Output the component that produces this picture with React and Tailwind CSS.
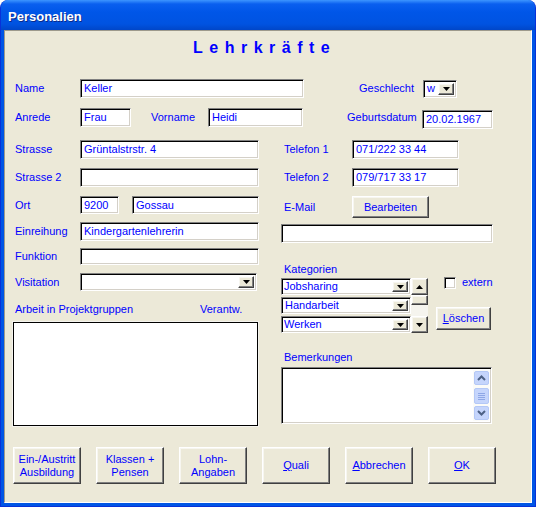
import React from "react";

const sunken =
  "bg-white border border-t-[#808080] border-l-[#808080] border-b-white border-r-white shadow-[inset_1px_1px_0_#000,inset_-1px_-1px_0_#d4d0c8]";
const raised =
  "bg-[#ECE9D8] border border-t-white border-l-white border-b-[#404040] border-r-[#404040] shadow-[inset_-1px_-1px_0_#808080,inset_1px_1px_0_#f7f6f0]";

function Label({ className = "", children }) {
  return <div className={`flex items-center shrink-0 whitespace-nowrap ${className}`}>{children}</div>;
}

function Field({ className = "", children }) {
  return (
    <div className={`${sunken} flex items-center shrink-0 pl-[3px] whitespace-nowrap overflow-hidden ${className}`}>
      {children}
    </div>
  );
}

function Arrow({ up }) {
  return (
    <svg width="7" height="4" viewBox="0 0 7 4">
      <path d={up ? "M3.5 0L7 4H0z" : "M0 0h7L3.5 4z"} fill="#000" />
    </svg>
  );
}

function DropBtn({ className = "" }) {
  return (
    <div className={`${raised} ml-auto h-full w-[16px] shrink-0 flex items-center justify-center ${className}`}>
      <Arrow />
    </div>
  );
}

function Combo({ className = "", children, pad = "pl-[3px]" }) {
  return (
    <div className={`${sunken} flex items-center shrink-0 p-[2px] ${className}`}>
      <span className={`${pad} whitespace-nowrap`}>{children}</span>
      <DropBtn />
    </div>
  );
}

function Button({ className = "", children }) {
  return (
    <div className={`${raised} flex flex-col items-center justify-center shrink-0 leading-[13px] text-center ${className}`}>
      {children}
    </div>
  );
}

function Chevron({ up }) {
  return (
    <svg width="9" height="6" viewBox="0 0 9 6">
      <path d={up ? "M1 5L4.5 1.5L8 5" : "M1 1L4.5 4.5L8 1"} fill="none" stroke="#4d6185" strokeWidth="2" />
    </svg>
  );
}

export default function App() {
  return (
    <div className="w-[536px] h-[507px] bg-white font-['Liberation_Sans',Arial,sans-serif] text-[11px] text-[#0000FF]">
      <div className="w-full h-full flex flex-col rounded-t-[8px] overflow-hidden bg-[#0055E5] border-l border-r border-b border-[#0831D9]">
        {/* title bar */}
        <div className="h-[30px] shrink-0 flex items-center pl-[7px] pt-[3px] bg-[linear-gradient(to_bottom,#3d95ff_0px,#0a5fef_4px,#0056e8_12px,#0053e1_24px,#0046c8_30px)]">
          <span className="text-white font-bold text-[13px] [text-shadow:1px_1px_0_#0a2a8a]">Personalien</span>
        </div>

        {/* client area */}
        <div className="flex-1 mx-[3px] mb-[3px] bg-[#ECE9D8] border border-t-[#9d9a8c] border-l-[#9d9a8c] border-b-white border-r-white flex flex-col">
          <div className="mt-[7px] pl-[188px] h-[20px] flex items-center text-[16px] font-bold tracking-[6.5px]">
            Lehrkräfte
          </div>

          {/* Name row */}
          <div className="mt-[21px] pl-[10px] h-[19px] flex items-center">
            <Label className="w-[65px]">Name</Label>
            <Field className="w-[224px] h-[19px]">Keller</Field>
            <Label className="ml-[55px] w-[64px]">Geschlecht</Label>
            <Combo className="w-[34px] h-[18px]" pad="pl-[1px]">w</Combo>
          </div>

          {/* Anrede row */}
          <div className="mt-[10px] pl-[10px] flex items-start">
            <Label className="w-[65px] h-[19px]">Anrede</Label>
            <Field className="w-[51px] h-[19px]">Frau</Field>
            <Label className="ml-[20px] w-[57px] h-[19px]">Vorname</Label>
            <Field className="w-[95px] h-[19px]">Heidi</Field>
            <Label className="ml-[44px] w-[75px] h-[19px]">Geburtsdatum</Label>
            <Field className="mt-[2px] w-[71px] h-[19px]">20.02.1967</Field>
          </div>

          {/* two columns */}
          <div className="mt-[11px] flex items-start">
            {/* left column */}
            <div className="ml-[8px] w-[246px] flex flex-col">
              <div className="flex items-center h-[19px]">
                <Label className="ml-[2px] w-[65px]">Strasse</Label>
                <Field className="w-[179px] h-[19px]">Grüntalstrstr. 4</Field>
              </div>
              <div className="mt-[9px] flex items-center h-[19px]">
                <Label className="ml-[2px] w-[65px]">Strasse 2</Label>
                <Field className="w-[179px] h-[19px]" />
              </div>
              <div className="mt-[9px] flex items-center h-[18px]">
                <Label className="ml-[2px] w-[65px]">Ort</Label>
                <Field className="w-[39px] h-[18px]">9200</Field>
                <Field className="ml-[13px] w-[127px] h-[18px]">Gossau</Field>
              </div>
              <div className="mt-[8px] flex items-center h-[19px]">
                <Label className="ml-[2px] w-[65px]">Einreihung</Label>
                <Field className="w-[179px] h-[19px]">Kindergartenlehrerin</Field>
              </div>
              <div className="mt-[7px] flex items-center h-[17px]">
                <Label className="ml-[2px] w-[65px]">Funktion</Label>
                <Field className="w-[179px] h-[17px]" />
              </div>
              <div className="mt-[8px] flex items-center h-[18px]">
                <Label className="ml-[2px] w-[65px]">Visitation</Label>
                <Combo className="w-[177px] h-[18px]" />
              </div>
              <div className="mt-[12px] flex items-center h-[13px]">
                <Label className="ml-[2px] w-[185px]">Arbeit in Projektgruppen</Label>
                <Label>Verantw.</Label>
              </div>
              <div className="mt-[6px] w-[245px] h-[104px] bg-white border border-black shadow-[0_0_0_1px_#f4f3ee]" />
            </div>

            {/* right column */}
            <div className="ml-[22px] flex flex-col">
              <div className="flex items-center h-[19px]">
                <Label className="ml-[3px] w-[68px]">Telefon 1</Label>
                <Field className="w-[107px] h-[19px]">071/222 33 44</Field>
              </div>
              <div className="mt-[9px] flex items-center h-[19px]">
                <Label className="ml-[3px] w-[68px]">Telefon 2</Label>
                <Field className="w-[107px] h-[19px]">079/717 33 17</Field>
              </div>
              <div className="mt-[9px] flex items-center h-[22px]">
                <Label className="ml-[3px] w-[68px]">E-Mail</Label>
                <Button className="w-[77px] h-[22px]">Bearbeiten</Button>
              </div>
              <Field className="mt-[6px] w-[212px] h-[19px]" />
              <Label className="mt-[20px] ml-[3px] h-[13px]">Kategorien</Label>

              <div className="flex items-start">
                <div className="mt-[2px] flex w-[147px] h-[55px]">
                  <div className="w-[130px] flex flex-col gap-[2px]">
                    <Combo className="w-[130px] h-[17px]" pad="pl-0">Jobsharing</Combo>
                    <Combo className="w-[130px] h-[17px]" pad="pl-[1px]">Handarbeit</Combo>
                    <Combo className="w-[130px] h-[17px]" pad="pl-0">Werken</Combo>
                  </div>
                  <div className="w-[17px] h-[55px] flex flex-col bg-[#f5f4ee]">
                    <div className={`${raised} h-[17px] flex items-center justify-center`}>
                      <Arrow up />
                    </div>
                    <div className={`${raised} h-[10px]`} />
                    <div className="flex-1" />
                    <div className={`${raised} h-[17px] flex items-center justify-center`}>
                      <Arrow />
                    </div>
                  </div>
                </div>
                <div className="flex flex-col">
                  <div className="ml-[16px] flex items-center h-[13px]">
                    <div className={`${sunken} w-[12px] h-[12px]`} />
                    <span className="ml-[6px]">extern</span>
                  </div>
                  <Button className="mt-[18px] ml-[8px] w-[55px] h-[23px]">
                    <span>
                      <span className="underline">L</span>öschen
                    </span>
                  </Button>
                </div>
              </div>

              <Label className="mt-[18px] ml-[3px] h-[13px]">Bemerkungen</Label>
              <div className={`${sunken} mt-[3px] w-[211px] h-[57px] flex justify-end p-[2px]`}>
                <div className="w-[16px] h-full flex flex-col items-center pt-[1px] bg-[#fbfbf8]">
                  <div className="w-[15px] h-[14px] rounded-[2px] bg-[#c5d5fc] border border-[#b4c8f6] flex items-center justify-center">
                    <Chevron up />
                  </div>
                  <div className="mt-[3px] w-[15px] h-[16px] rounded-[2px] bg-[#c5d5fc] border border-[#b4c8f6] flex flex-col items-center justify-center gap-[1px]">
                    <div className="w-[7px] h-[1px] bg-[#8ea7e6]" />
                    <div className="w-[7px] h-[1px] bg-[#8ea7e6]" />
                    <div className="w-[7px] h-[1px] bg-[#8ea7e6]" />
                    <div className="w-[7px] h-[1px] bg-[#8ea7e6]" />
                  </div>
                  <div className="mt-auto mb-[1px] w-[15px] h-[14px] rounded-[2px] bg-[#c5d5fc] border border-[#b4c8f6] flex items-center justify-center">
                    <Chevron />
                  </div>
                </div>
              </div>
            </div>
          </div>

          {/* bottom buttons */}
          <div className="mt-[21px] ml-[8px] flex gap-[15px]">
            <Button className="w-[68px] h-[37px]">
              <span>Ein-/Austritt</span>
              <span>Ausbildung</span>
            </Button>
            <Button className="w-[68px] h-[37px]">
              <span>Klassen +</span>
              <span>Pensen</span>
            </Button>
            <Button className="w-[68px] h-[37px]">
              <span>Lohn-</span>
              <span>Angaben</span>
            </Button>
            <Button className="w-[68px] h-[37px]">
              <span>
                <span className="underline">Q</span>uali
              </span>
            </Button>
            <Button className="w-[68px] h-[37px]">
              <span>
                <span className="underline">A</span>bbrechen
              </span>
            </Button>
            <Button className="w-[68px] h-[37px]">
              <span>
                <span className="underline">O</span>K
              </span>
            </Button>
          </div>
        </div>
      </div>
    </div>
  );
}
